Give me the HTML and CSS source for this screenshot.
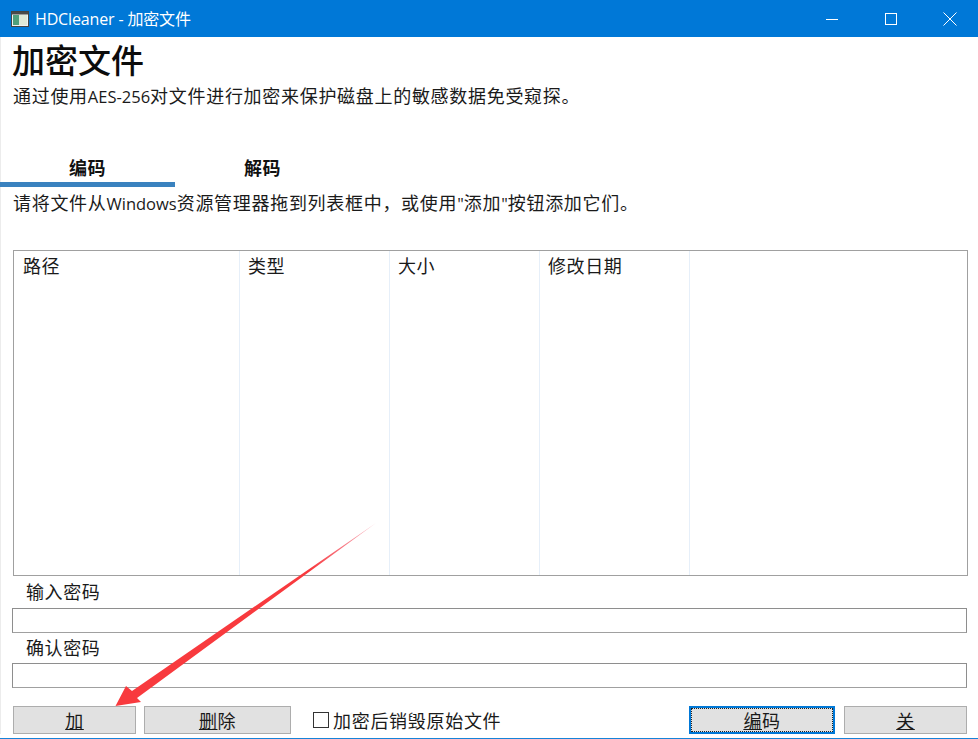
FILE: index.html
```html
<!DOCTYPE html>
<html lang="zh">
<head>
<meta charset="utf-8">
<title>HDCleaner - 加密文件</title>
<link rel="stylesheet" href="styles.css">
</head>
<body>
<div class="window">
  <header class="titlebar">
    <svg class="appicon" width="18" height="16" viewBox="0 0 18 16">
      <rect x="0.500" y="0.500" width="17" height="15" fill="#f2f2f2" stroke="#444"/>
      <rect x="1" y="1" width="16" height="2.500" fill="#4a4a4a"/>
      <rect x="2" y="4" width="6" height="10" fill="#4f9f7c"/>
      <rect x="8" y="4" width="8" height="10" fill="#dfe8d8"/>
    </svg>
    <span class="apptitle">HDCleaner - 加密文件</span>
    <div class="winbtns">
      <svg width="14" height="14" viewBox="0 0 14 14"><path d="M1 7.500H13" stroke="#fff" fill="none"/></svg>
      <svg width="14" height="14" viewBox="0 0 14 14"><rect x="1.500" y="1.500" width="11" height="11" stroke="#fff" fill="none"/></svg>
      <svg width="14" height="14" viewBox="0 0 14 14"><path d="M0.500 0.500L13.500 13.500M13.500 0.500L0.500 13.500" stroke="#fff" fill="none"/></svg>
    </div>
  </header>
  <main class="content">
    <h1 class="heading">加密文件</h1>
    <p class="subtitle">通过使用<span class="latin">AES-256</span>对文件进行加密来保护磁盘上的敏感数据免受窥探。</p>
    <nav class="tabs">
      <div class="tab tab-active">编码</div>
      <div class="tab">解码</div>
    </nav>
    <p class="hint">请将文件从<span class="latin">Windows</span>资源管理器拖到列表框中，或使用<span class="latin">"</span>添加<span class="latin">"</span>按钮添加它们。</p>
    <section class="listbox">
      <div class="col col-path">路径</div>
      <div class="col col-std">类型</div>
      <div class="col col-std">大小</div>
      <div class="col col-std">修改日期</div>
    </section>
    <label class="field-label first">输入密码</label>
    <div class="input"></div>
    <label class="field-label second">确认密码</label>
    <div class="input"></div>
    <footer class="actions">
      <button class="btn btn-add"><u>加</u></button>
      <button class="btn btn-del"><u>删</u>除</button>
      <span class="check"><span class="checkbox"></span>加密后销毁原始文件</span>
      <button class="btn btn-encode"><u>编</u>码</button>
      <button class="btn btn-close"><u>关</u></button>
    </footer>
  </main>
  <svg class="arrow" width="978" height="739" viewBox="0 0 978 739">
    <defs>
      <linearGradient id="fade" gradientUnits="userSpaceOnUse" x1="376" y1="523" x2="310" y2="569">
        <stop offset="0" stop-color="#f0405a" stop-opacity="0.4"/>
        <stop offset="1" stop-color="#f83a3e"/>
      </linearGradient>
    </defs>
    <path d="M376 523L132 691L126 686L115.500 706L141 702L137 698Z" fill="url(#fade)"/>
  </svg>
</div>
</body>
</html>
```
FILE: styles.css
```css
* { box-sizing: border-box; }
html, body { margin: 0; padding: 0; background: #fff; }
body {
  font-family: "Noto Sans CJK SC", "Liberation Sans", sans-serif;
  color: #1a1a1a;
  overflow: hidden;
}
.window {
  position: relative;
  width: 978px;
  height: 739px;
  border-bottom: 1px solid #1683d8;
  overflow: hidden;
}
.titlebar {
  display: flex;
  align-items: center;
  height: 37px;
  padding-left: 11px;
  background: #0078d7;
  color: #fff;
}
.appicon { flex: none; }
.apptitle {
  margin-left: 6px;
  font-family: "Open Sans", "Noto Sans CJK SC", sans-serif;
  font-size: 16px;
  line-height: 20px;
  letter-spacing: -0.15px;
}
.winbtns {
  display: flex;
  gap: 45px;
  align-items: center;
  margin-left: auto;
  margin-right: 21px;
}
.content {
  display: flex;
  flex-direction: column;
  padding: 0 11px 0 11px;
  border-left: 1px solid #ececec;
}
.heading {
  margin: 1px 0 0;
  font-size: 33px;
  line-height: 42px;
  font-weight: 500;
  color: #0c0c0c;
}
.subtitle {
  height: 24px;
  margin: 3px 0 0 1px;
  font-size: 18px;
  letter-spacing: 0.7px;
  line-height: 24px;
  white-space: nowrap;
}
.latin {
  font-family: "Open Sans", "Liberation Sans", sans-serif;
  font-size: 16.5px;
  letter-spacing: 0;
}
.tabs {
  display: flex;
  margin: 48px 0 0 -12px;
}
.tab {
  width: 175px;
  height: 32px;
  text-align: center;
  font-size: 18px;
  line-height: 24px;
  font-weight: 700;
  letter-spacing: 0.5px;
  color: #111;
}
.tab-active { border-bottom: 5px solid #3a82bf; }
.hint {
  height: 24px;
  margin: 3px 0 0 1px;
  font-size: 18px;
  letter-spacing: 0.7px;
  line-height: 24px;
  white-space: nowrap;
}
.listbox {
  display: flex;
  width: 955px;
  height: 326px;
  margin: 36px 0 0 1px;
  border: 1px solid #a0a0a0;
  background: #fff;
}
.col {
  height: 100%;
  padding: 2px 0 0 9px;
  font-size: 18px;
  letter-spacing: 0.6px;
  line-height: 24px;
  border-right: 1px solid #e6eff9;
}
.col-path { width: 226px; }
.col-std { width: 150px; padding-left: 8px; }
.field-label {
  display: block;
  margin-left: 14px;
  font-size: 18px;
  letter-spacing: 0.6px;
  line-height: 24px;
}
.field-label.first { margin-top: 3px; line-height: 25px; }
.field-label.second { margin-top: 2px; }
.input {
  width: 955px;
  height: 25px;
  margin-top: 4px;
  border: 1px solid #8e8e8e;
  border-bottom-color: #a0a0a0;
  background: #fff;
}
.actions {
  display: flex;
  align-items: center;
  margin-top: 18px;
  padding-left: 1px;
}
.btn {
  height: 28px;
  padding: 0;
  border: 1px solid #adadad;
  background: #e1e1e1;
  color: #1a1a1a;
  font-family: inherit;
  font-size: 18px;
  letter-spacing: 0.6px;
  line-height: 22px;
}
.btn-add { width: 123px; }
.btn-del { width: 147px; margin-left: 8px; }
.btn-encode {
  width: 146px;
  margin-left: auto;
  border: 2px solid #0078d7;
  outline: 1px dotted #222;
  outline-offset: -3px;
}
.btn-close { width: 123px; margin-left: 9px; }
.check {
  display: flex;
  align-items: center;
  margin-left: 22px;
  font-size: 18px;
  letter-spacing: 0.7px;
  line-height: 24px;
}
.checkbox {
  width: 16px;
  height: 16px;
  margin-right: 4px;
  border: 1px solid #333;
  background: #fff;
}
.arrow {
  position: absolute;
  left: 0;
  top: 0;
  pointer-events: none;
}
```
